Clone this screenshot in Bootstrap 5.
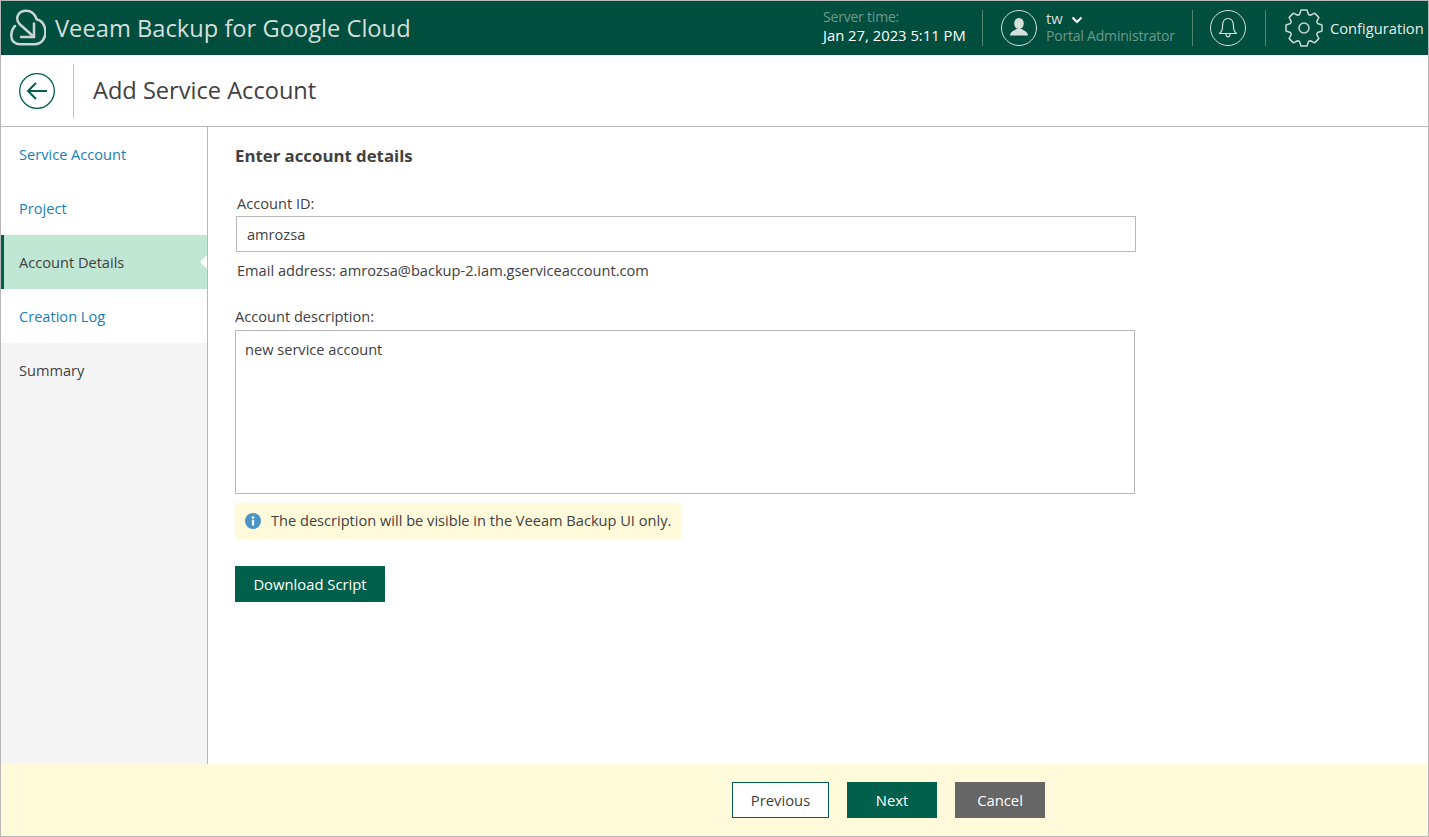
<!DOCTYPE html>
<html lang="en">
<head>
<meta charset="utf-8">
<title>Add Service Account</title>
<link href="https://cdn.jsdelivr.net/npm/bootstrap@5.3.0/dist/css/bootstrap.min.css" rel="stylesheet">
<style>
html,body{height:100%;margin:0;overflow:hidden}
body{font-family:"Open Sans",sans-serif;font-size:14.6px;color:#414042;background:#fff}
.shell{height:837px;width:1429px;border:1px solid #b8b8b8}
.topbar{height:54px;background:#004e3d;color:#fff}
.brand-logo{margin-left:7px;margin-right:9px}
.brand-name{font-size:23.7px;color:#d5dfdc;line-height:54px}
.srv{line-height:18px;font-size:14.8px;padding-bottom:4px}
.srv-time{width:159px}
.srv-user{width:146px;margin-left:9px;line-height:18px;padding-bottom:2px}
.uname{color:#d5dfdc}
.dim{color:#6d9a8e;font-size:14px;letter-spacing:-.2px}
.vsep{width:1px;height:36px;background:#4f8375}
.ring{width:36px;height:36px;border:1px solid #d5dfdc;border-radius:50%}
.ring-user{margin-left:18px}
.ring-bell{margin-left:17px;margin-right:19px}
.gear{margin-left:19px}
.chev{margin-left:5px}
.cfg{width:93px;margin-left:7px;margin-right:5px;color:#e8eeec;line-height:20px;font-size:14.7px}
.titlebar{height:72px;border-bottom:1px solid #b8b8b8}
.back-cell{width:73px;height:54px;border-right:1px solid #c4c4c4;padding-left:18px}
.page-title{font-size:23.6px;padding-left:19px;color:#414042}
.main-row{height:637px}
.side{width:207px;background:#f5f5f5;border-right:1px solid #b8b8b8}
.step{height:54px;padding-left:18px;line-height:55px;background:#fff;color:#1a7fb5;text-decoration:none;display:block}
.step-on{background:#c0e6d4;color:#414042;border-left:3px solid #00604b;padding-left:15px;position:relative}
.step-on::after{content:"";position:absolute;right:0;top:20px;border:7px solid transparent;border-right-color:#fff;border-left:0}
.step-off{background:transparent;color:#414042}
.pane{padding:18px 0 0 27px}
.sec-head{font-size:16.8px;font-weight:700;line-height:22px;margin-bottom:26px}
.fld-label{line-height:20px;margin:0 0 3px 2px;display:block}
.fld-label-b{margin:0 0 4px}
.box{border:1px solid #b8b8b8;border-radius:0;color:#414042;box-shadow:none}
.id-box{width:900px;height:36px;padding:0 10px;margin-left:1px;font-size:14.6px}
.mail{line-height:20px;margin:8px 0 26px 2px}
.desc-box{width:900px;height:164px;padding:8px 9px;resize:none;display:block;font-size:14.6px}
.hint{background:#fffbda;height:36px;width:446px;margin-top:9px;padding-left:10px;gap:10px;margin-bottom:27px}
.act{height:36px;border-radius:0;font-size:14.8px;line-height:20px;padding:0;border:1px solid #00604b}
.act-main{background:#00604b;color:#fff;width:150px}
.foot{height:72px;background:#fffbda;gap:18px;padding-top:18px;padding-left:731px}
.w-prev{width:97px;background:#fff;color:#414042}
.w-next{width:90px;background:#00604b;color:#fff}
.w-cancel{width:90px;background:#666;border-color:#666;color:#fff}
</style>
</head>
<body>
<div class="shell d-flex flex-column">
  <div class="topbar d-flex align-items-center">
    <svg class="brand-logo" width="38" height="38" viewBox="0 0 38 38" fill="none" stroke="#c9d6d2" stroke-width="2.5" stroke-linecap="round" stroke-linejoin="round" aria-hidden="true"><path d="M26 28L11.500 15C6.500 9 10.500 1.800 18 1.800C23 1.800 27 5 28.800 10.500C34 11 37.500 17 37.500 23C37.500 30 33 35.200 27 35.200H12C6.500 35.200 3.300 31.500 3.300 27C3.300 23 4.500 19.500 7 17"/><path d="M26 14.500V28H13"/></svg>
    <div class="brand-name">Veeam Backup for Google Cloud</div>
    <div class="ms-auto d-flex align-items-center">
      <div class="srv srv-time"><div class="dim">Server time:</div><div>Jan 27, 2023 5:11 PM</div></div>
      <div class="vsep"></div>
      <div class="ring ring-user d-flex align-items-center justify-content-center">
        <svg width="22" height="22" viewBox="0 0 22 22" fill="#d5dfdc" aria-hidden="true"><ellipse cx="11" cy="6.500" rx="4.800" ry="5.500"/><path d="M2 18.500C2 15 6 13.500 8.500 12H13.500C16 13.500 20 15 20 18.500Z"/></svg>
      </div>
      <div class="srv srv-user">
        <div class="uname">tw<svg class="chev ms-2" width="12" height="8" viewBox="0 0 12 8" fill="none" stroke="#fff" stroke-width="2" aria-hidden="true"><path d="M1.500 1.500L6 6L10.500 1.500"/></svg></div>
        <div class="dim">Portal Administrator</div>
      </div>
      <div class="vsep"></div>
      <div class="ring ring-bell d-flex align-items-center justify-content-center">
        <svg width="20" height="24" viewBox="0 0 20 24" fill="none" stroke="#d5dfdc" stroke-width="1.200" stroke-linejoin="round" aria-hidden="true"><path d="M1.500 17.500C4 15.500 4.500 13.500 4.500 10.500C4.500 5.500 6.500 2.500 10 2.500C13.500 2.500 15.500 5.500 15.500 10.500C15.500 13.500 16 15.500 18.500 17.500Z"/><path d="M8 18C8 20 9 20.800 10 20.800C11 20.800 12 20 12 18"/></svg>
      </div>
      <div class="vsep"></div>
      <svg class="gear" width="38" height="38" viewBox="0 0 38 38" fill="none" stroke="#c9d6d2" stroke-width="1.500" stroke-linejoin="round" aria-hidden="true"><circle cx="19" cy="19" r="5"/><path d="M14.500 5.500L16 1H22L23.500 5.500L25.370 6.270L29.610 4.150L33.850 8.390L31.730 12.630L32.500 14.500L37 16V22L32.500 23.500L31.730 25.370L33.850 29.610L29.610 33.850L25.370 31.730L23.500 32.500L22 37H16L14.500 32.500L12.630 31.730L8.390 33.850L4.150 29.610L6.270 25.370L5.500 23.500L1 22V16L5.500 14.500L6.270 12.630L4.150 8.390L8.390 4.150L12.630 6.270Z"/></svg>
      <div class="cfg">Configuration</div>
    </div>
  </div>
  <div class="titlebar d-flex align-items-center">
    <div class="back-cell d-flex align-items-center">
      <svg width="36" height="36" viewBox="0 0 36 36" fill="none" stroke="#00604b" aria-hidden="true"><circle cx="18" cy="18" r="17.300" stroke-width="1.300"/><path d="M28 18H9M17 10L9 18L17 26" stroke-width="2"/></svg>
    </div>
    <div class="page-title">Add Service Account</div>
  </div>
  <div class="main-row d-flex">
    <nav class="side flex-shrink-0">
      <a class="step" href="#">Service Account</a>
      <a class="step" href="#">Project</a>
      <a class="step step-on" href="#">Account Details</a>
      <a class="step" href="#">Creation Log</a>
      <a class="step step-off" href="#">Summary</a>
    </nav>
    <div class="pane flex-grow-1">
      <div class="sec-head">Enter account details</div>
      <label class="fld-label" for="aid">Account ID:</label>
      <input id="aid" class="box id-box d-block" value="amrozsa">
      <div class="mail">Email address: amrozsa@backup-2.iam.gserviceaccount.com</div>
      <label class="fld-label fld-label-b" for="adesc">Account description:</label>
      <textarea id="adesc" class="box desc-box">new service account</textarea>
      <div class="hint d-flex align-items-center">
        <svg width="16" height="16" viewBox="0 0 16 16" aria-hidden="true"><circle cx="8" cy="8" r="8" fill="#4a94c8"/><rect x="6.900" y="6.800" width="2.200" height="5.700" fill="#fff"/><circle cx="8" cy="4.500" r="1.300" fill="#fff"/></svg>
        <span>The description will be visible in the Veeam Backup UI only.</span>
      </div>
      <button class="btn act act-main" type="button">Download Script</button>
    </div>
  </div>
  <div class="foot d-flex align-items-start">
    <button class="btn act w-prev" type="button">Previous</button>
    <button class="btn act w-next" type="button">Next</button>
    <button class="btn act w-cancel" type="button">Cancel</button>
  </div>
</div>
</body>
</html>
